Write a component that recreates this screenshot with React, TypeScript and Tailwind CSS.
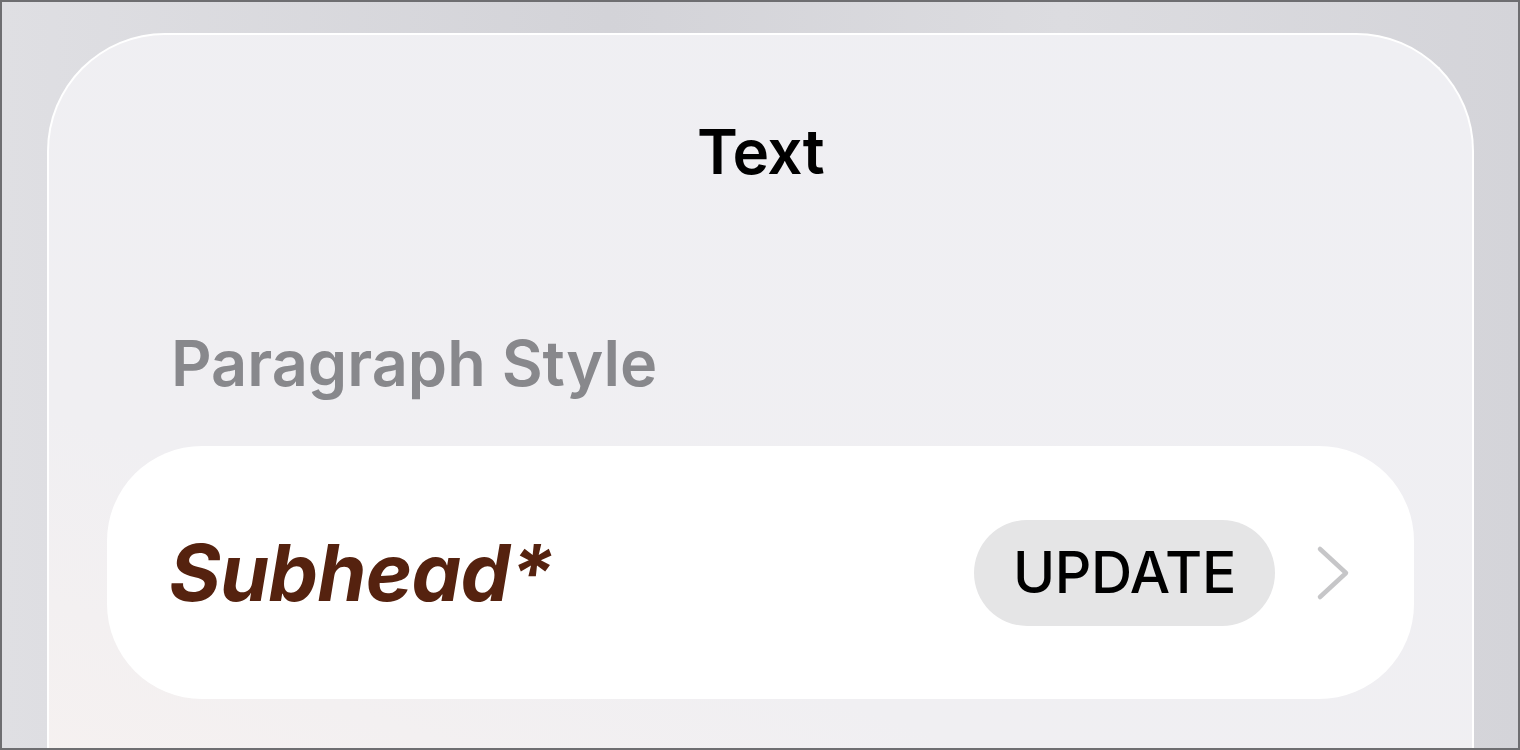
import React from "react";

export default function App() {
  return (
    <div className="w-[1520px] h-[750px] overflow-hidden border-2 border-[#6e6e71] bg-[linear-gradient(90deg,#dfdfe3_0%,#d3d3d8_40%,#dcdce0_70%,#d4d4d9_100%)] pl-[45px] pr-[44px] pt-[31px]" style={{ fontFamily: "Inter, 'Noto Sans', sans-serif" }}>
      <div className="h-[760px] rounded-t-[118px] border-2 border-b-0 border-white bg-[linear-gradient(20deg,#f6f1f0_0%,#f0eff2_30%,#efeff3_100%)] flex flex-col">
        <div className="pt-[86px] text-center text-[62px] leading-none font-semibold tracking-[-0.01em] text-black">Text</div>
        <div className="mt-[149px] pl-[122px] text-[63px] leading-none font-semibold text-[#88888c]">Paragraph Style</div>
        <div className="mt-[51px] mx-[58px] h-[253px] rounded-[95px] bg-white flex items-center pl-[62px] pr-[63px]">
          <div className="flex-1 text-[79px] font-bold italic leading-none text-[#55220f] tracking-[-0.01em]">Subhead*</div>
          <div className="h-[106px] w-[301px] rounded-full bg-[#e5e5e6] flex items-center justify-center text-[57px] font-medium leading-none text-black tracking-[-0.005em]">UPDATE</div>
          <svg className="ml-[40px]" width="36" height="56" viewBox="0 0 36 56" fill="none">
            <path d="M5 4 L31 28 L5 52" stroke="#c6c6c8" strokeWidth="4.5" strokeLinecap="round" strokeLinejoin="round" />
          </svg>
        </div>
      </div>
    </div>
  );
}
